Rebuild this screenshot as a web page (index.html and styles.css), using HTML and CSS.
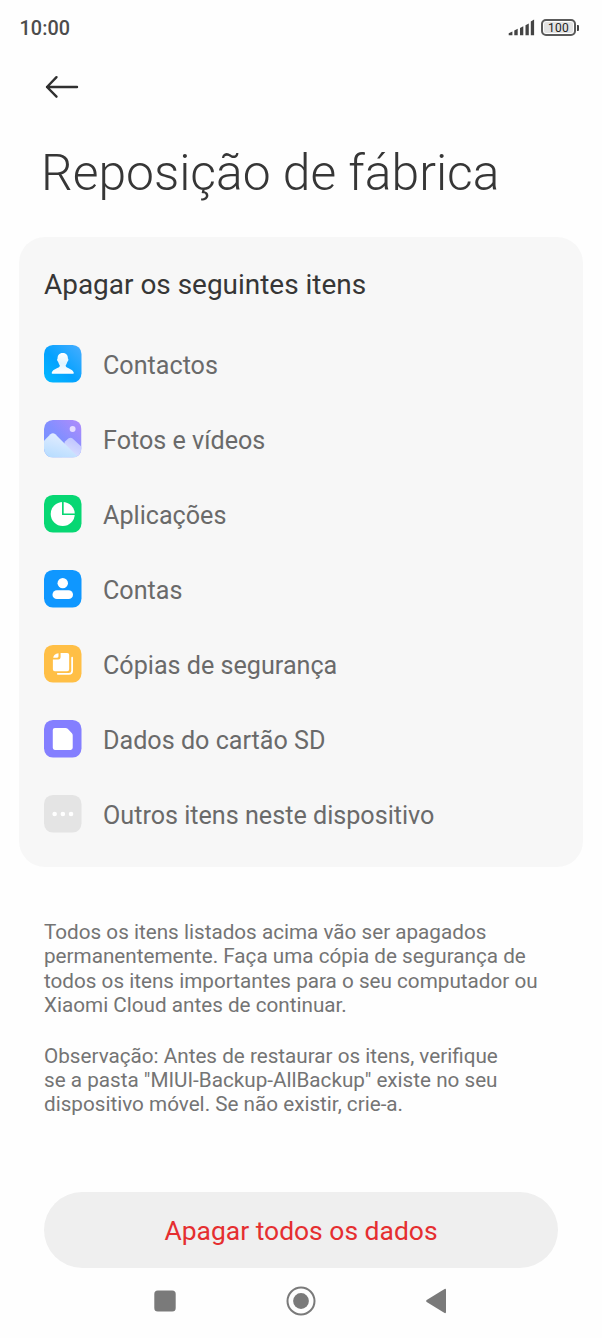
FILE: index.html
```html
<!DOCTYPE html>
<html lang="pt">
<head>
<meta charset="utf-8">
<title>Reposição de fábrica</title>
<link rel="stylesheet" href="styles.css">
</head>
<body>
<div class="screen">
  <header class="status">
    <span class="time">10:00</span>
    <div class="indicators">
      <svg width="27" height="18" viewBox="0 0 27 18" fill="#444"><path d="M.7 14.200 4.400 12.600V16.200H.7zM6.300 11.600 9.700 9.700V16.200H6.300zM12 9 15.300 7.200V16.200H12zM17.500 6.200 20.800 4.400V16.200H17.500zM22.800 2.500 26.100 .4V16.200H22.800z"/></svg>
      <div class="battery"><span>100</span></div>
      <div class="battery-tip"></div>
    </div>
  </header>
  <nav class="topbar">
    <svg width="34" height="24" viewBox="0 0 34 24" fill="none" stroke="#303030" stroke-width="2.400" stroke-linecap="round" stroke-linejoin="round"><path d="M11.500 2.200 2 12l9.500 9.700M2 12h30"/></svg>
  </nav>
  <h1 class="title"><span>Reposição de fábrica</span></h1>
  <section class="card">
    <h2 class="heading"><span>Apagar os seguintes itens</span></h2>
    <ul class="items">
      <li class="item">
        <svg class="icon" viewBox="0 0 38 38"><defs><linearGradient id="contact-bg" x1="0" y1="1" x2="1" y2="0"><stop offset="0" stop-color="#02baff"/><stop offset=".45" stop-color="#04a2ff"/><stop offset="1" stop-color="#48adff"/></linearGradient><linearGradient id="contact-fg" x1="0" y1="0" x2="0" y2="1"><stop offset="0" stop-color="#fff"/><stop offset=".5" stop-color="#e0f4ff"/><stop offset="1" stop-color="#fff"/></linearGradient></defs><rect width="38" height="38" rx="9" fill="url(#contact-bg)"/><path fill="url(#contact-fg)" d="M19 8c3.800 0 5.400 2.500 5.200 5.700.9.400.6 2.600-.5 3.200-.5 2-1.500 3.100-1.800 4 .5 2.800 7.400 2.700 8.300 7.200q.2 1.100-.8 1.100H8.600q-1 0-.8-1.100c.9-4.500 7.800-4.400 8.300-7.200-.3-.9-1.300-2-1.800-4-1.100-.6-1.400-2.800-.5-3.200C13.600 10.500 15.200 8 19 8z"/></svg>
        <span>Contactos</span>
      </li>
      <li class="item">
        <svg class="icon" viewBox="0 0 38 38"><defs><linearGradient id="photo-bg" x1="0" y1="1" x2="1" y2="0"><stop offset="0" stop-color="#7195ff"/><stop offset=".5" stop-color="#838fff"/><stop offset="1" stop-color="#b28bfb"/></linearGradient><linearGradient id="photo-front" x1=".1" y1="1" x2=".5" y2="0"><stop offset="0" stop-color="#b5dcff"/><stop offset="1" stop-color="#e4edff"/></linearGradient><linearGradient id="photo-back" x1="0" y1="1" x2=".5" y2="0"><stop offset="0" stop-color="#e0e8ff"/><stop offset="1" stop-color="#c1c6ff"/></linearGradient><clipPath id="photo-clip"><rect width="38" height="38" rx="9"/></clipPath></defs><g clip-path="url(#photo-clip)"><path fill="url(#photo-bg)" d="M0 0h38v38H0z"/><path fill="url(#photo-back)" d="m21 22 4-3.400q2-1.400 4 .2L38 27v11H18z"/><path fill="url(#photo-front)" d="m0 21 6.500-6.500q2.500-2.200 5 0L35 38H0z"/><circle cx="29" cy="9.200" r="3" fill="#e5dcff"/></g></svg>
        <span>Fotos e vídeos</span>
      </li>
      <li class="item">
        <svg class="icon" viewBox="0 0 38 38"><rect width="38" height="38" rx="9" fill="#07d773"/><circle cx="19" cy="19.200" r="12.200" fill="#fff"/><path d="M19.100 6v13.500H32" fill="none" stroke="#07d773" stroke-width="1.700"/></svg>
        <span>Aplicações</span>
      </li>
      <li class="item">
        <svg class="icon" viewBox="0 0 38 38"><rect width="38" height="38" rx="9" fill="#0f97ff"/><circle cx="19" cy="13.300" r="5.300" fill="#fff"/><rect x="8.600" y="20.500" width="20.800" height="9" rx="4.500" fill="#fff"/></svg>
        <span>Contas</span>
      </li>
      <li class="item">
        <svg class="icon" viewBox="0 0 38 38"><rect width="38" height="38" rx="9" fill="#ffbf46"/><path fill="#fff" d="M16.800 8h6.700q2 0 2 2v14.500q0 2-2 2H11q-2 0-2-2v-9.800h5.500q2.300 0 2.300-2.300zM14.700 8.300v3.100q0 1.400-1.400 1.400H9.300q.5-3.700 5.400-4.500z"/><path d="M28.500 12.800v13.200q0 3.200-3.200 3.200H14" fill="none" stroke="#fff" stroke-width="1.800" stroke-linecap="round"/></svg>
        <span>Cópias de segurança</span>
      </li>
      <li class="item">
        <svg class="icon" viewBox="0 0 38 38"><rect width="38" height="38" rx="9" fill="#847fff"/><path fill="#fff" d="M11 8h10.800q1.300 0 2.200.9l4.300 4.500q.8.800.8 2v12.800q0 2.100-2.100 2.100H11q-2.100 0-2.100-2.100V10.100Q8.900 8 11 8z"/></svg>
        <span>Dados do cartão SD</span>
      </li>
      <li class="item">
        <svg class="icon" viewBox="0 0 38 38"><rect width="38" height="38" rx="9" fill="#e4e4e4"/><g fill="#fff"><circle cx="10.800" cy="19.200" r="2.300"/><circle cx="19.100" cy="19.200" r="2.300"/><circle cx="27.400" cy="19.200" r="2.300"/></g></svg>
        <span>Outros itens neste dispositivo</span>
      </li>
    </ul>
  </section>
  <section class="notes">
    <p>Todos os itens listados acima vão ser apagados<br>permanentemente. Faça uma cópia de segurança de<br>todos os itens importantes para o seu computador ou<br>Xiaomi Cloud antes de continuar.</p>
    <p>Observação: Antes de restaurar os itens, verifique<br>se a pasta "MIUI-Backup-AllBackup" existe no seu<br>dispositivo móvel. Se não existir, crie-a.</p>
  </section>
  <button class="erase">Apagar todos os dados</button>
  <footer class="navbar">
    <svg width="30" height="30" viewBox="0 0 30 30"><rect x="4.300" y="4.500" width="21.400" height="21" rx="3.500" fill="#7a7a7a"/></svg>
    <svg width="30" height="30" viewBox="0 0 30 30"><circle cx="15" cy="15" r="13.500" fill="none" stroke="#7a7a7a" stroke-width="2"/><circle cx="15" cy="15" r="7.900" fill="#7a7a7a"/></svg>
    <svg width="30" height="30" viewBox="0 0 30 30"><path d="M4.700 14 22.600 3q1.400-.6 1.400 1v22q0 1.600-1.400 1L4.700 16q-1.400-1 0-2z" fill="#7a7a7a"/></svg>
  </footer>
</div>
</body>
</html>
```

FILE: styles.css
```css
* { box-sizing: border-box; margin: 0; padding: 0; }
body { background: #fefefe; font-family: Roboto, sans-serif; }
.screen { display: flex; flex-direction: column; width: 602px; height: 1338px; overflow: hidden; }
.status { display: flex; justify-content: space-between; align-items: center; height: 56px; padding: 0 23px 0 19.500px; }
.time { font-size: 19.800px; font-weight: 500; letter-spacing: .1px; color: #4c4c4c; }
.indicators { display: flex; align-items: center; padding-bottom: 1px; }
.battery { display: flex; align-items: center; justify-content: center; width: 35px; height: 17px; margin-left: 6px; border: 2px solid #5a5a5a; border-radius: 5px; background: #e3e3e3; box-shadow: inset 0 0 0 1px #fefefe; color: #222; font-size: 12px; font-weight: 400; line-height: 13px; letter-spacing: .3px; }
.battery span { padding-top: 1px; }
.battery-tip { width: 2px; height: 6px; margin-left: 1px; border-radius: 0 1px 1px 0; background: #444; }
.topbar { display: flex; align-items: center; height: 62px; padding-left: 45px; }
.title { height: 119px; padding: 26px 0 0 41px; color: #363636; font-size: 49.800px; font-weight: 300; line-height: 58px; white-space: nowrap; }
.card { height: 630px; margin: 0 19px; padding: 30px 25px 0; border-radius: 26px; background: #f7f7f7; }
.heading { height: 60px; color: #363636; font-size: 27.950px; font-weight: 400; line-height: 36px; }
.items { list-style: none; }
.item { display: flex; align-items: center; gap: 21.500px; height: 75px; padding-bottom: 1px; color: #6a6a6a; font-size: 25.150px; line-height: 34px; }
.item span { padding-top: 3px; }
.icon { width: 37.500px; height: 37.500px; flex: none; }
.notes { display: flex; flex-direction: column; gap: 26.500px; height: 325px; padding: 53px 0 0 44px; color: #747474; font-size: 20.680px; line-height: 24.250px; white-space: nowrap; }
.erase { flex: none; height: 75.500px; margin: 0 44px; padding-top: 1.500px; border: 0; border-radius: 38px; background: #efefef; color: #e52e30; font-family: inherit; font-size: 26.450px; }
.navbar { display: flex; justify-content: space-between; align-items: flex-start; padding: 18.500px 150px 0; }
```
